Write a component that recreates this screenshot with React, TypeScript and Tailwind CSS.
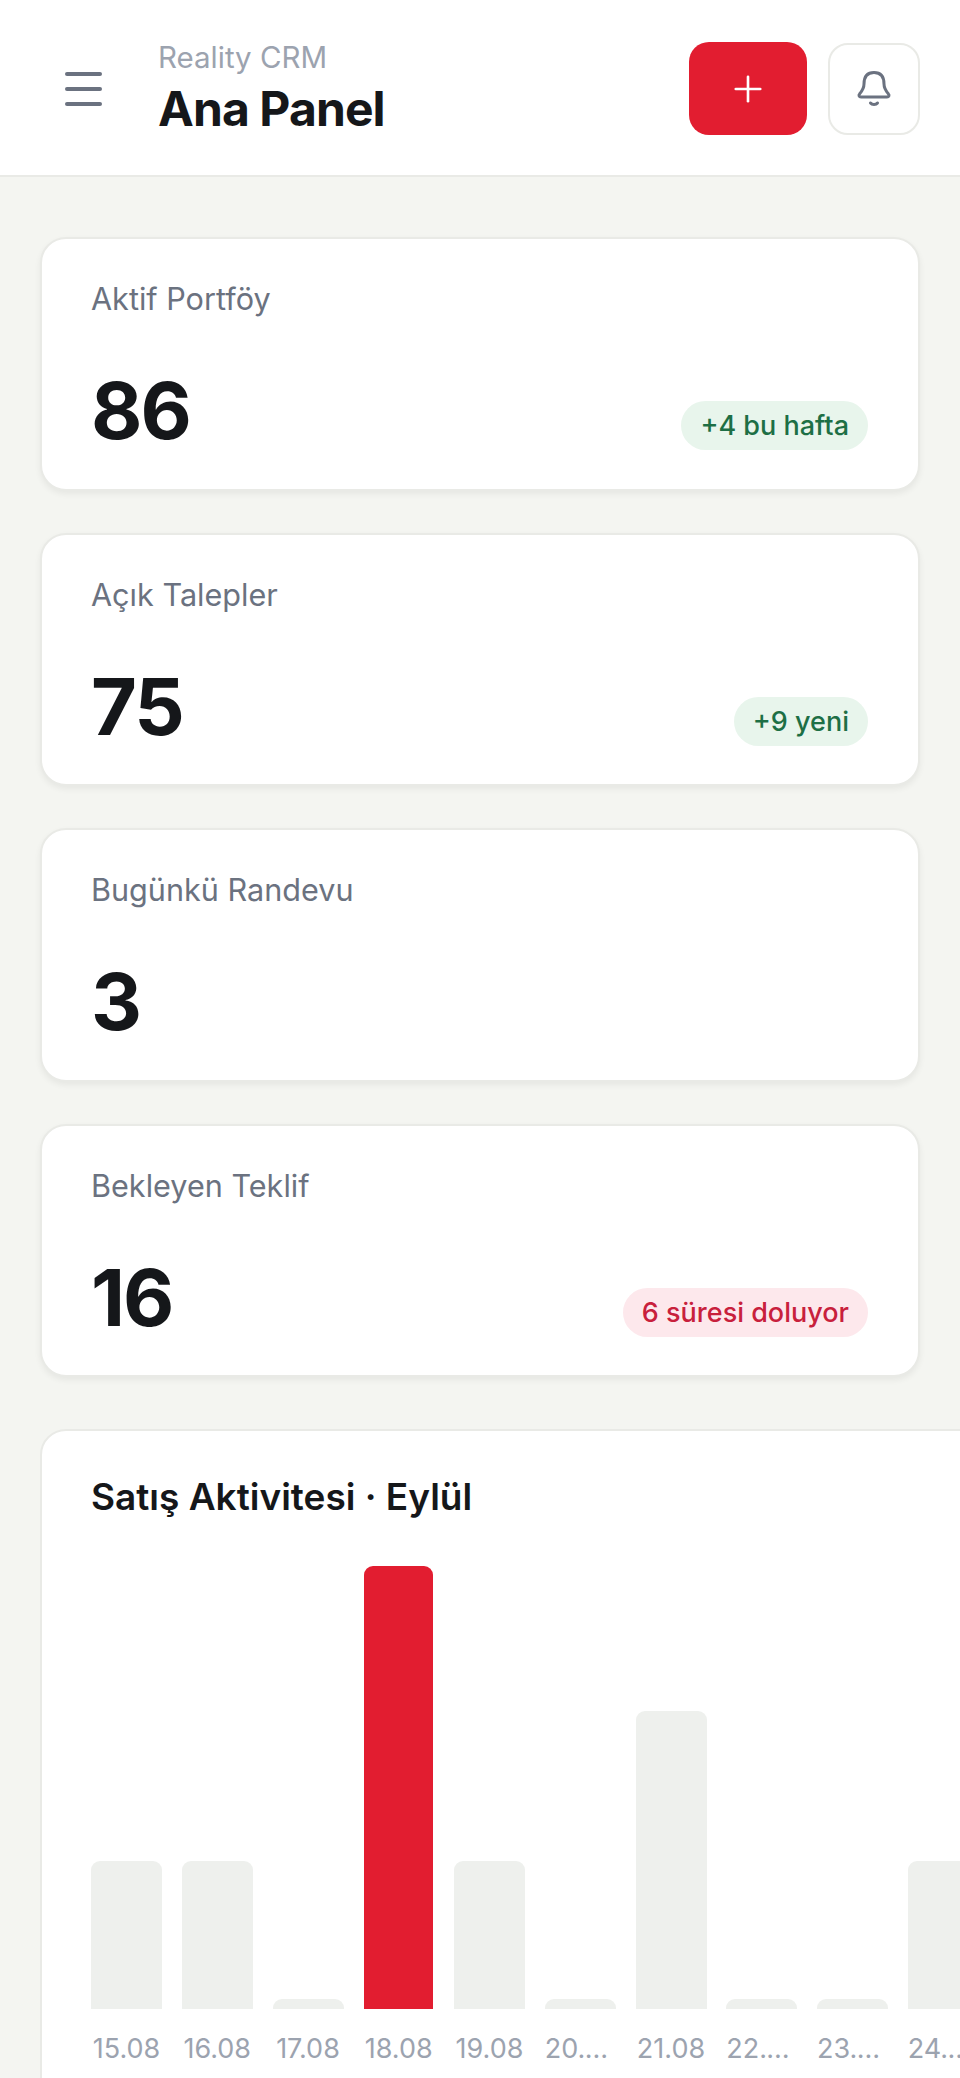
import { Plus } from "lucide-react";

const stats = [
  { label: "Aktif Portföy", value: "86", chip: "+4 bu hafta", tone: "green" },
  { label: "Açık Talepler", value: "75", chip: "+9 yeni", tone: "green" },
  { label: "Bugünkü Randevu", value: "3" },
  { label: "Bekleyen Teklif", value: "16", chip: "6 süresi doluyor", tone: "red" },
];

const bars = [
  { day: "15.08", h: "h-[148px]" },
  { day: "16.08", h: "h-[148px]" },
  { day: "17.08", h: "h-[10px]" },
  { day: "18.08", h: "h-[443px]", active: true },
  { day: "19.08", h: "h-[148px]" },
  { day: "20.08", h: "h-[10px]" },
  { day: "21.08", h: "h-[298px]" },
  { day: "22.08", h: "h-[10px]" },
  { day: "23.08", h: "h-[10px]" },
  { day: "24.08", h: "h-[148px]" },
  { day: "25.08", h: "h-[148px]" },
];

const App = () => {
  return (
    <div className="h-[2078px] w-[960px] overflow-hidden bg-[#f4f5f1] font-['Inter',sans-serif]">
      {/* header */}
      <header className="flex h-[177px] items-center border-b-2 border-[#e9eae6] bg-white pt-[2px] pr-[40px] pl-[65px]">
        <div className="flex w-[37px] flex-col gap-[11px]">
          <span className="h-[4px] rounded-full bg-[#6b7280]" />
          <span className="h-[4px] rounded-full bg-[#6b7280]" />
          <span className="h-[4px] rounded-full bg-[#6b7280]" />
        </div>
        <div className="mb-[1px] ml-[56px] flex-1">
          <p className="text-[29.5px] leading-[36px] text-[#9ca3af]">Reality CRM</p>
          <h1 className="mt-[5px] text-[48px] leading-[58px] font-bold tracking-[-0.9px] text-[#15171a]">Ana Panel</h1>
        </div>
        <button className="flex h-[93px] w-[118px] items-center justify-center rounded-[20px] bg-[#e21d30] text-white">
          <Plus size={42} strokeWidth={1.5} />
        </button>
        <button className="ml-[21px] flex h-[92px] w-[92px] items-center justify-center rounded-[20px] border-2 border-[#e9eae6] bg-white">
          <svg width="40" height="40" viewBox="0 0 40 40" fill="none" stroke="#6b7280" strokeWidth="3" strokeLinecap="round" strokeLinejoin="round">
            <path d="M7 28H33C35 28 35.5 26 34.5 25C31 21 30 18 30 15C30 7 26 3.5 20 3.5C14 3.5 10 7 10 15C10 18 9 21 5.5 25C4.5 26 5 28 7 28Z" />
            <path d="M16.5 34C18 36 22 36 23.5 34" />
          </svg>
        </button>
      </header>

      <main className="pt-[60px] pl-[40px]">
        <div className="flex w-[880px] flex-col gap-[42px]">
          {stats.map((s) => (
            <section
              key={s.label}
              className="h-[253.6px] rounded-[26px] border-2 border-[#e9eae6] bg-white pt-[38px] pr-[50px] pl-[49px] shadow-[0_3px_6px_rgba(0,0,0,0.06)]"
            >
              <p className="text-[30.6px] leading-[44px] text-[#6b7280]">{s.label}</p>
              <div className="mt-[39px] flex items-end justify-between">
                <span className="text-[79px] leading-[100px] font-bold tracking-[-2px] text-[#15171a]">{s.value}</span>
                {s.chip && (
                  <span
                    className={
                      s.tone === "red"
                        ? "mb-[10px] rounded-full bg-[#fde8ec] px-[19px] py-[6px] text-[27px] leading-[37px] font-medium text-[#c8203c]"
                        : "mb-[10px] rounded-full bg-[#e8f5ec] px-[19px] py-[6px] text-[27px] leading-[37px] font-medium text-[#1d6f45]"
                    }
                  >
                    {s.chip}
                  </span>
                )}
              </div>
            </section>
          ))}
        </div>

        {/* chart card runs past the right and bottom edges of the window */}
        <section className="mt-[52px] w-[1200px] rounded-[26px] border-2 border-[#e9eae6] bg-white pt-[38px] pb-[80px] pl-[49px]">
          <h2 className="text-[37px] leading-[56px] font-semibold text-[#15171a]">Satış Aktivitesi · Eylül</h2>
          <div className="mt-[41px] flex gap-[19.75px]">
            {bars.map((b) => (
              <div key={b.day} className="w-[71px] shrink-0">
                <div className="flex h-[443px] items-end justify-center">
                  <div
                    className={
                      b.active
                        ? `w-[69px] rounded-t-[9px] bg-[#e21d30] ${b.h}`
                        : `w-full rounded-t-[9px] bg-[#eef0ed] ${b.h}`
                    }
                  />
                </div>
                <p className="mt-[21px] truncate text-center text-[27px] leading-[38px] text-[#9ca3af]">{b.day}</p>
              </div>
            ))}
          </div>
        </section>
      </main>
    </div>
  );
};

export default App;
